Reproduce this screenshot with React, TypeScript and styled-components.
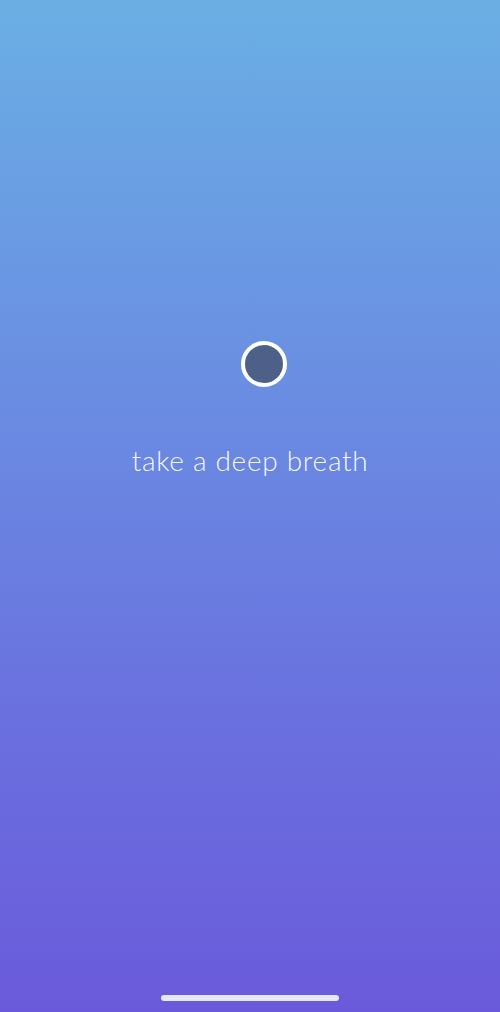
import React from "react"
import styled, { createGlobalStyle } from "styled-components"

const GlobalStyle = createGlobalStyle`
  html, body {
    margin: 0;
    padding: 0;
  }
  body {
    font-family: Lato, "Open Sans", sans-serif;
  }
`

const Screen = styled.div`
  width: 500px;
  height: 1012px;
  background: linear-gradient(180deg, #6aafe4 0%, #6a8ce2 40%, #6a71df 70%, #6a5adb 100%);
  display: flex;
  flex-direction: column;
  align-items: center;
  overflow: hidden;
`

const Dot = styled.div`
  margin-top: 341px;
  margin-left: 28px;
  width: 38px;
  height: 38px;
  border-radius: 50%;
  border: 4px solid #ffffff;
  background: #4d6188;
`

const Caption = styled.div`
  margin-top: 56px;
  font-family: Lato, sans-serif;
  font-weight: 300;
  font-size: 28px;
  letter-spacing: 0.7px;
  color: rgba(255, 255, 255, 0.96);
`

const HomeBar = styled.div`
  margin-top: auto;
  margin-bottom: 11px;
  width: 178px;
  height: 6px;
  border-radius: 3px;
  background: #e8e6f6;
`

export default function App() {
  return (
    <>
      <GlobalStyle />
      <Screen>
        <Dot />
        <Caption>take a deep breath</Caption>
        <HomeBar />
      </Screen>
    </>
  )
}
